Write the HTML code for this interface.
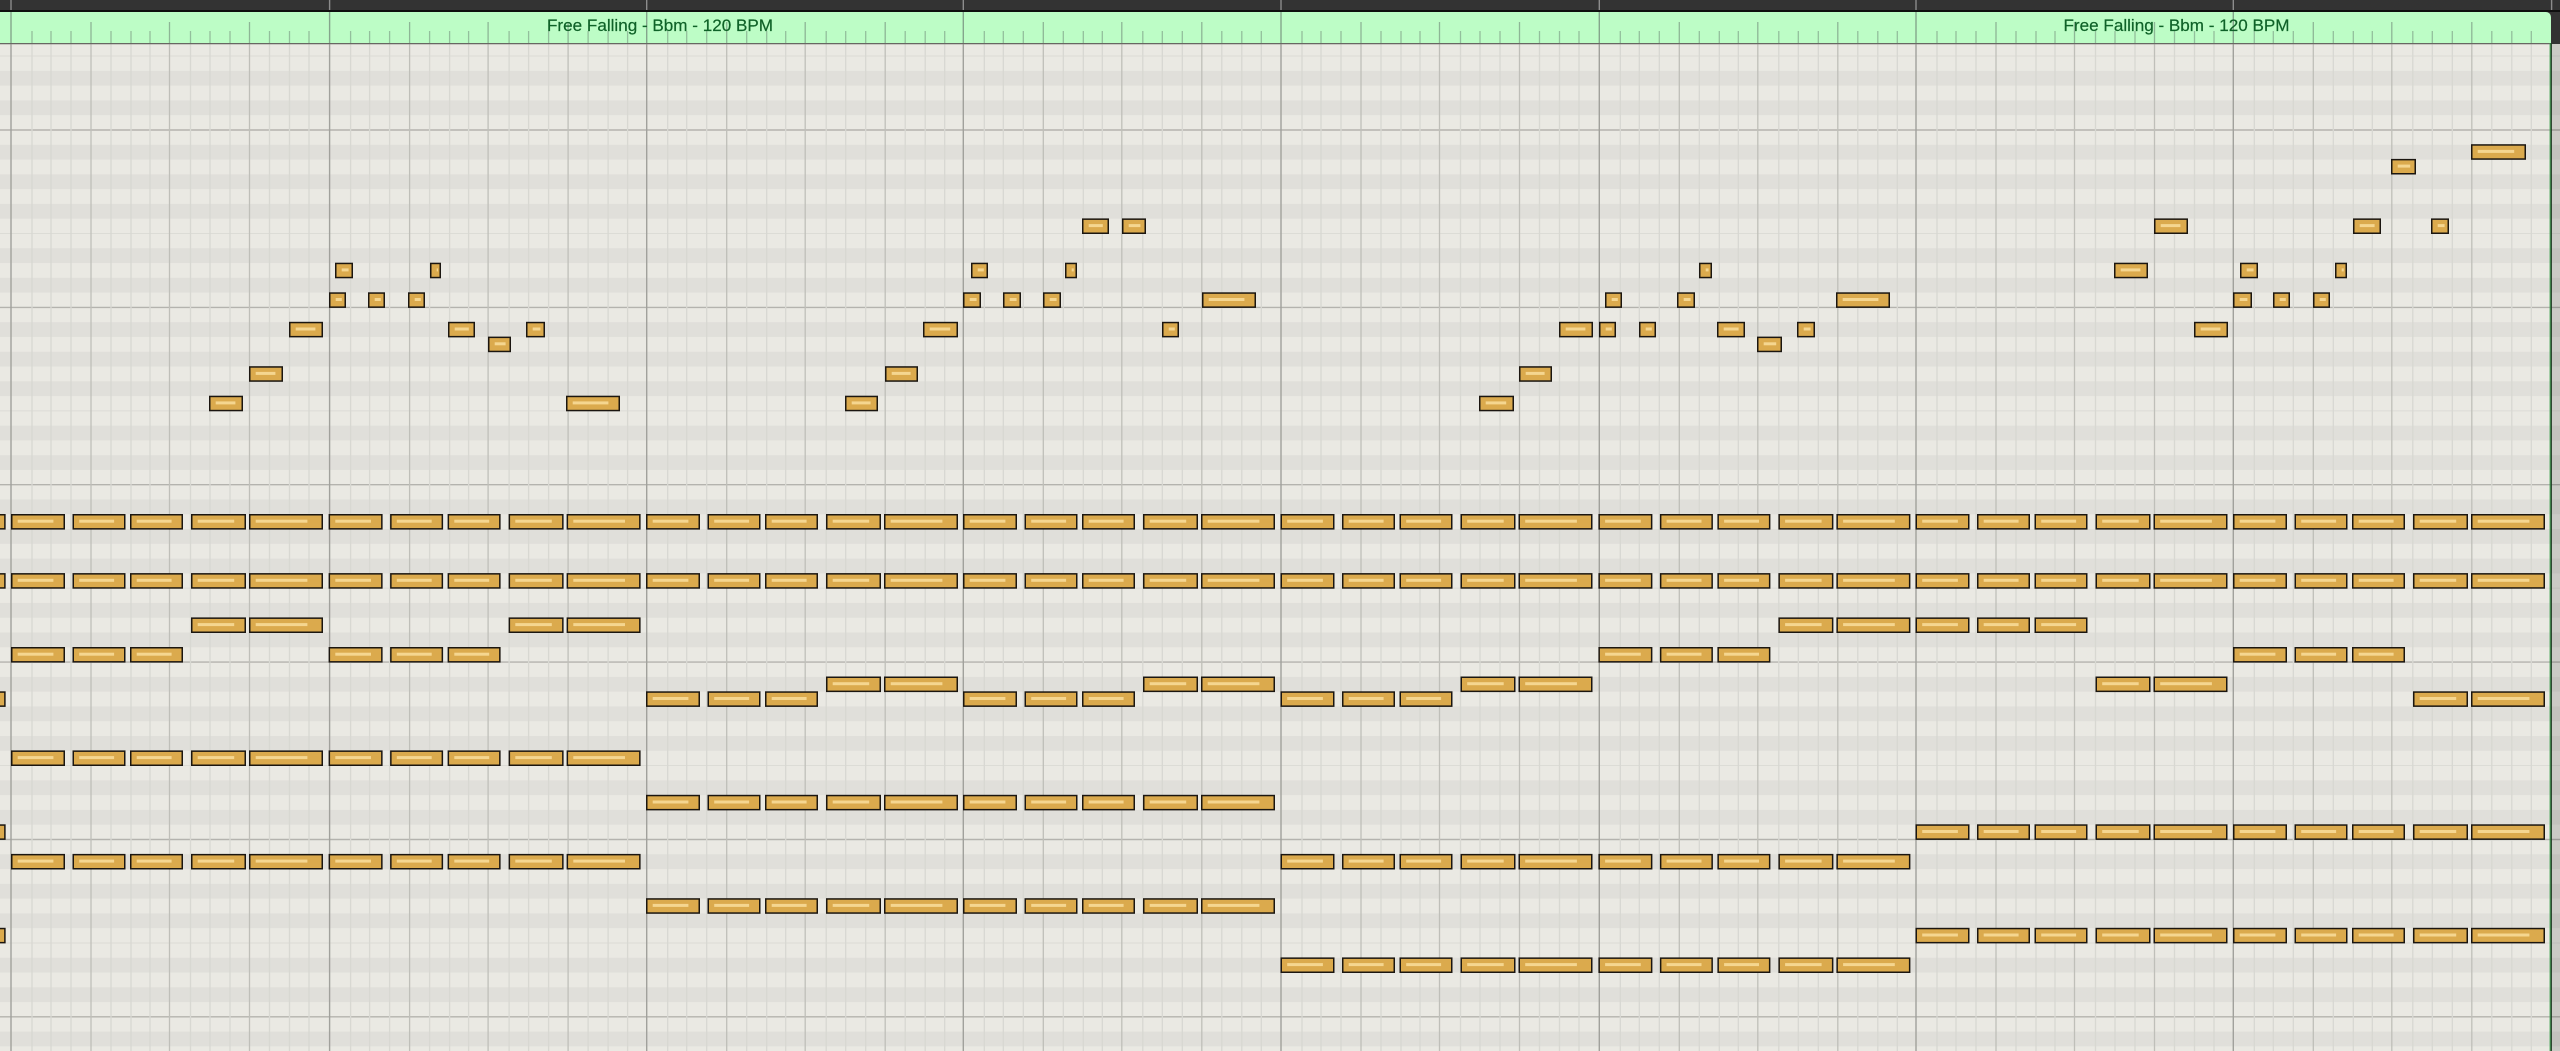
<!DOCTYPE html>
<html lang="en">
<head>
<meta charset="utf-8">
<title>Free Falling - Bbm - 120 BPM</title>
<style>
html,body{margin:0;padding:0;width:2560px;height:1051px;overflow:hidden;background:#eae9e3}
svg{display:block}
.n{fill:#dbaa4d;stroke:#1b1610;stroke-width:1.5}
.h{fill:#f5d690}
text{font-family:"Liberation Sans",sans-serif;font-size:17px;fill:#0f6228;stroke:#0f6228;stroke-width:.2}
</style>
</head>
<body>
<svg xmlns="http://www.w3.org/2000/svg" width="2560" height="1051" viewBox="0 0 2560 1051">
<defs>
<g id="oct">
<rect x="0" y="14.78" width="2560" height="14.78" fill="#e0dfda"/>
<rect x="0" y="44.34" width="2560" height="14.78" fill="#e0dfda"/>
<rect x="0" y="73.9" width="2560" height="14.78" fill="#e0dfda"/>
<rect x="0" y="118.24" width="2560" height="14.78" fill="#e0dfda"/>
<rect x="0" y="147.8" width="2560" height="14.78" fill="#e0dfda"/>
<path d="M0 103.46H2560" stroke="#dcdcd6" stroke-width="1" fill="none"/>
<path d="M0 0H2560" stroke="#b4b3ae" stroke-width="1.4" fill="none"/>
</g>
<g id="grid" fill="none" stroke-width="1.3">
<path stroke="#d8d8d2" d="M21 0V1051M40 0V1051M60 0V1051M100 0V1051M120 0V1051M139 0V1051M179.5 0V1051M199 0V1051M219 0V1051M258.5 0V1051M278.5 0V1051M298 0V1051"/>
<path stroke="#bfbfb9" d="M80 0V1051M158.5 0V1051M238.5 0V1051"/>
<path stroke="#a1a19c" stroke-width="1.4" d="M0 0V1051"/>
</g>
<g id="ht" fill="none" stroke-width="1.3">
<path stroke="#93bf9c" d="M21 31V43M40 31V43M60 31V43M100 31V43M120 31V43M139 31V43M179.5 31V43M199 31V43M219 31V43M258.5 31V43M278.5 31V43M298 31V43"/>
<path stroke="#8db696" d="M80 22V43M158.5 22V43M238.5 22V43"/>
<path stroke="#84a58c" stroke-width="1.4" d="M0 12V43"/>
<path stroke="#8c8c8c" stroke-width="1.4" d="M0 0V10"/>
</g>
<g id="m11"><rect class="n" x=".75" y=".75" width="9.5" height="14.1"/><rect class="h" x="6.7" y="5.7" width="1.3" height="3"/></g>
<g id="m12"><rect class="n" x=".75" y=".75" width="10.5" height="14.1"/><rect class="h" x="6.7" y="5.7" width="2.1" height="3"/></g>
<g id="m13"><rect class="n" x=".75" y=".75" width="11.5" height="14.1"/><rect class="h" x="6.7" y="5.7" width="2.9" height="3"/></g>
<g id="m17"><rect class="n" x=".75" y=".75" width="15.5" height="14.1"/><rect class="h" x="6.7" y="5.7" width="6.1" height="3"/></g>
<g id="m18"><rect class="n" x=".75" y=".75" width="16.5" height="14.1"/><rect class="h" x="6.7" y="5.7" width="6.9" height="3"/></g>
<g id="m19"><rect class="n" x=".75" y=".75" width="17.5" height="14.1"/><rect class="h" x="6.7" y="5.7" width="7.7" height="3"/></g>
<g id="m23"><rect class="n" x=".75" y=".75" width="21.5" height="14.1"/><rect class="h" x="6.7" y="5.7" width="10.9" height="3"/></g>
<g id="m24"><rect class="n" x=".75" y=".75" width="22.5" height="14.1"/><rect class="h" x="6.7" y="5.7" width="11.7" height="3"/></g>
<g id="m25"><rect class="n" x=".75" y=".75" width="23.5" height="14.1"/><rect class="h" x="6.7" y="5.7" width="12.5" height="3"/></g>
<g id="m27"><rect class="n" x=".75" y=".75" width="25.5" height="14.1"/><rect class="h" x="6.7" y="5.7" width="14.1" height="3"/></g>
<g id="m28"><rect class="n" x=".75" y=".75" width="26.5" height="14.1"/><rect class="h" x="6.7" y="5.7" width="14.9" height="3"/></g>
<g id="m33"><rect class="n" x=".75" y=".75" width="31.5" height="14.1"/><rect class="h" x="6.7" y="5.7" width="18.9" height="3"/></g>
<g id="m34"><rect class="n" x=".75" y=".75" width="32.5" height="14.1"/><rect class="h" x="6.7" y="5.7" width="19.7" height="3"/></g>
<g id="m35"><rect class="n" x=".75" y=".75" width="33.5" height="14.1"/><rect class="h" x="6.7" y="5.7" width="20.5" height="3"/></g>
<g id="m53"><rect class="n" x=".75" y=".75" width="51.5" height="14.1"/><rect class="h" x="6.7" y="5.7" width="34.9" height="3"/></g>
<g id="m54"><rect class="n" x=".75" y=".75" width="52.5" height="14.1"/><rect class="h" x="6.7" y="5.7" width="35.7" height="3"/></g>
<g id="m55"><rect class="n" x=".75" y=".75" width="53.5" height="14.1"/><rect class="h" x="6.7" y="5.7" width="36.5" height="3"/></g>
<g id="m74"><rect class="n" x=".75" y=".75" width="72.5" height="14.1"/><rect class="h" x="6.7" y="5.7" width="51.7" height="3"/></g>
<g id="a"><use href="#m54" x="0"/><use href="#m53" x="61.5"/><use href="#m53" x="119"/></g>
<g id="c"><use href="#m55" x="180"/><use href="#m74" x="238"/></g>
<g id="b"><use href="#a"/><use href="#c"/></g>
<g id="p"><rect class="n" x="-5" y=".75" width="9.9" height="14.1"/></g>
</defs>

<!-- background rows -->
<rect x="0" y="0" width="2560" height="1051" fill="#eae9e3"/>
<use href="#oct" y="-47.4"/>
<use href="#oct" y="130"/>
<use href="#oct" y="307.4"/>
<use href="#oct" y="484.7"/>
<use href="#oct" y="662.1"/>
<use href="#oct" y="839.5"/>
<rect x="0" y="1031.58" width="2560" height="14.78" fill="#e0dfda"/>
<path d="M0 1016.8H2560" stroke="#b4b3ae" stroke-width="1.4" fill="none"/>

<!-- grid -->
<use href="#grid" x="11"/>
<use href="#grid" x="329.6"/>
<use href="#grid" x="646.7"/>
<use href="#grid" x="963.3"/>
<use href="#grid" x="1281"/>
<use href="#grid" x="1599.3"/>
<use href="#grid" x="1916"/>
<use href="#grid" x="2233.3"/>

<!-- area past region end -->
<rect x="2551" y="43" width="9" height="1008" fill="#000" fill-opacity=".13"/>

<!-- header -->
<rect x="0" y="0" width="2560" height="44" fill="#333"/>
<rect x="0" y="10" width="2560" height="2" fill="#0f0f0f"/>
<path d="M0 12H2546a5 5 0 0 1 5 5V43H0Z" fill="#bdfdc6"/>
<rect x="0" y="43" width="2551" height="1.6" fill="#8a8a82" fill-opacity=".6"/>
<use href="#ht" x="11"/>
<use href="#ht" x="329.6"/>
<use href="#ht" x="646.7"/>
<use href="#ht" x="963.3"/>
<use href="#ht" x="1281"/>
<use href="#ht" x="1599.3"/>
<use href="#ht" x="1916"/>
<use href="#ht" x="2233.3"/>
<path d="M2551.6 0V10" stroke="#8c8c8c" stroke-width="1.4" fill="none"/>
<text x="547" y="31" textLength="226" lengthAdjust="spacingAndGlyphs">Free Falling - Bbm - 120 BPM</text>
<text x="2063.5" y="31" textLength="226" lengthAdjust="spacingAndGlyphs">Free Falling - Bbm - 120 BPM</text>

<!-- region end marker -->
<rect x="2549.6" y="43" width="1" height="1008" fill="#3da34e"/>
<rect x="2550.6" y="43" width="1.3" height="1008" fill="#1d3a22"/>

<!-- partial notes at left edge -->
<use href="#p" y="514"/>
<use href="#p" y="573.1"/>
<use href="#p" y="691.3"/>
<use href="#p" y="824.3"/>
<use href="#p" y="927.8"/>

<!-- chords -->
<use href="#b" x="11" y="514"/><use href="#b" x="328.6" y="514"/><use href="#b" x="646" y="514"/><use href="#b" x="963" y="514"/><use href="#b" x="1280.5" y="514"/><use href="#b" x="1598.4" y="514"/><use href="#b" x="1915.5" y="514"/><use href="#b" x="2233" y="514"/>
<use href="#b" x="11" y="573.1"/><use href="#b" x="328.6" y="573.1"/><use href="#b" x="646" y="573.1"/><use href="#b" x="963" y="573.1"/><use href="#b" x="1280.5" y="573.1"/><use href="#b" x="1598.4" y="573.1"/><use href="#b" x="1915.5" y="573.1"/><use href="#b" x="2233" y="573.1"/>
<use href="#c" x="11" y="617.4"/><use href="#c" x="328.6" y="617.4"/><use href="#c" x="1598.4" y="617.4"/><use href="#a" x="1915.5" y="617.4"/>
<use href="#a" x="11" y="647"/><use href="#a" x="328.6" y="647"/><use href="#a" x="1598.4" y="647"/><use href="#a" x="2233" y="647"/>
<use href="#c" x="646" y="676.5"/><use href="#c" x="963" y="676.5"/><use href="#c" x="1280.5" y="676.5"/><use href="#c" x="1915.5" y="676.5"/>
<use href="#a" x="646" y="691.3"/><use href="#a" x="963" y="691.3"/><use href="#a" x="1280.5" y="691.3"/><use href="#c" x="2233" y="691.3"/>
<use href="#b" x="11" y="750.4"/><use href="#b" x="328.6" y="750.4"/>
<use href="#b" x="646" y="794.8"/><use href="#b" x="963" y="794.8"/>
<use href="#b" x="1915.5" y="824.3"/><use href="#b" x="2233" y="824.3"/>
<use href="#b" x="11" y="853.9"/><use href="#b" x="328.6" y="853.9"/><use href="#b" x="1280.5" y="853.9"/><use href="#b" x="1598.4" y="853.9"/>
<use href="#b" x="646" y="898.2"/><use href="#b" x="963" y="898.2"/>
<use href="#b" x="1915.5" y="927.8"/><use href="#b" x="2233" y="927.8"/>
<use href="#b" x="1280.5" y="957.4"/><use href="#b" x="1598.4" y="957.4"/>

<!-- melody -->
<use href="#m34" x="209" y="395.7"/><use href="#m54" x="566" y="395.7"/><use href="#m33" x="845" y="395.7"/><use href="#m35" x="1479" y="395.7"/>
<use href="#m34" x="249" y="366.2"/><use href="#m33" x="885" y="366.2"/><use href="#m33" x="1519" y="366.2"/>
<use href="#m23" x="488" y="336.6"/><use href="#m25" x="1757" y="336.6"/>
<use href="#m34" x="289" y="321.8"/><use href="#m27" x="448" y="321.8"/><use href="#m19" x="526" y="321.8"/><use href="#m35" x="923" y="321.8"/><use href="#m17" x="1162" y="321.8"/><use href="#m34" x="1559" y="321.8"/><use href="#m17" x="1599" y="321.8"/><use href="#m17" x="1639" y="321.8"/><use href="#m28" x="1717" y="321.8"/><use href="#m18" x="1797" y="321.8"/><use href="#m34" x="2194" y="321.8"/>
<use href="#m17" x="329" y="292.3"/><use href="#m17" x="368" y="292.3"/><use href="#m17" x="408" y="292.3"/><use href="#m18" x="963" y="292.3"/><use href="#m18" x="1003" y="292.3"/><use href="#m18" x="1043" y="292.3"/><use href="#m54" x="1202" y="292.3"/><use href="#m17" x="1605" y="292.3"/><use href="#m18" x="1677" y="292.3"/><use href="#m54" x="1836" y="292.3"/><use href="#m19" x="2233" y="292.3"/><use href="#m17" x="2273" y="292.3"/><use href="#m17" x="2313" y="292.3"/>
<use href="#m18" x="335" y="262.7"/><use href="#m11" x="430" y="262.7"/><use href="#m17" x="971" y="262.7"/><use href="#m12" x="1065" y="262.7"/><use href="#m13" x="1699" y="262.7"/><use href="#m34" x="2114" y="262.7"/><use href="#m18" x="2240" y="262.7"/><use href="#m12" x="2335" y="262.7"/>
<use href="#m27" x="1082" y="218.4"/><use href="#m24" x="1122" y="218.4"/><use href="#m34" x="2154" y="218.4"/><use href="#m28" x="2353" y="218.4"/><use href="#m18" x="2431" y="218.4"/>
<use href="#m25" x="2391" y="158.9"/>
<use href="#m55" x="2471" y="144.2"/>
</svg>
</body>
</html>
